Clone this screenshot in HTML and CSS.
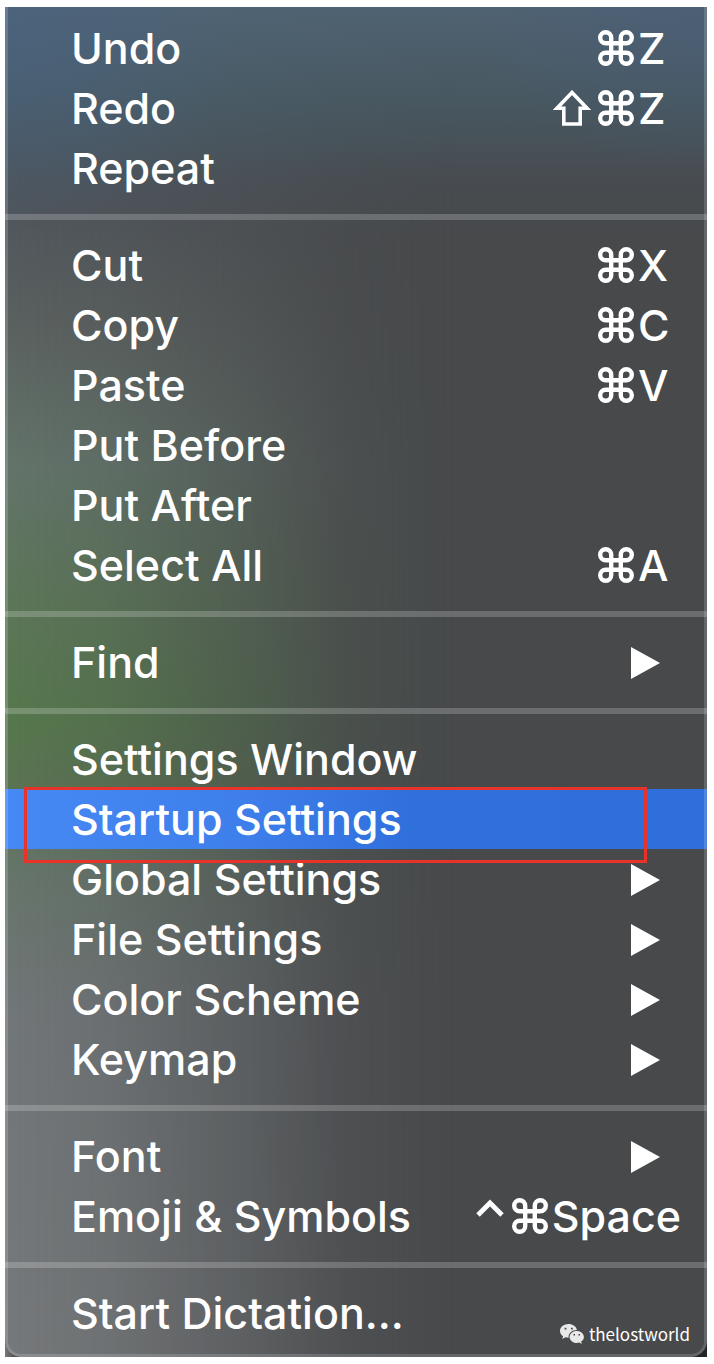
FILE: index.html
```html
<!DOCTYPE html>
<html lang="en">
<head>
<meta charset="utf-8">
<meta name="viewport" content="width=device-width, initial-scale=1">
<title>Edit menu</title>
<link rel="stylesheet" href="styles.css">
</head>
<body>
<svg class="defs" aria-hidden="true">
  <symbol id="cmd" viewBox="0 0 36 36">
    <path d="M13.200 13.200H22.800V22.800H13.200ZM13.200 13.200V7.700A5.500 5.500 0 1 0 7.700 13.200H13.200ZM22.800 13.200H28.300A5.500 5.500 0 1 0 22.800 7.700ZM22.800 22.800V28.300A5.500 5.500 0 1 0 28.300 22.800ZM13.200 22.800H7.700A5.500 5.500 0 1 0 13.200 28.300Z" fill="none" stroke="currentColor" stroke-width="4.400"/>
  </symbol>
  <symbol id="shift" viewBox="0 0 38 36">
    <path d="M19 2.500 34 18.200H27.200V34H10.800V18.200H4Z" fill="none" stroke="currentColor" stroke-width="3.600"/>
  </symbol>
  <symbol id="ctrl" viewBox="0 0 28 36">
    <path d="M2 17 14 5 26 17" fill="none" stroke="currentColor" stroke-width="4.800"/>
  </symbol>
  <symbol id="arrow" viewBox="0 0 29 32">
    <path d="M0 0 29 16 0 32Z" fill="currentColor"/>
  </symbol>
</svg>
<div class="backdrop">
<main class="menu">
  <ul class="group">
    <li><button class="item" type="button"><span>Undo</span><span class="keys"><svg class="cmd" role="img" aria-label="Command"><use href="#cmd"/></svg><kbd>Z</kbd></span></button></li>
    <li><button class="item" type="button"><span>Redo</span><span class="keys"><svg class="shift" role="img" aria-label="Shift"><use href="#shift"/></svg><svg class="cmd" role="img" aria-label="Command"><use href="#cmd"/></svg><kbd>Z</kbd></span></button></li>
    <li><button class="item" type="button"><span>Repeat</span></button></li>
  </ul>
  <ul class="group">
    <li><button class="item" type="button"><span>Cut</span><span class="keys"><svg class="cmd" role="img" aria-label="Command"><use href="#cmd"/></svg><kbd>X</kbd></span></button></li>
    <li><button class="item" type="button"><span>Copy</span><span class="keys"><svg class="cmd" role="img" aria-label="Command"><use href="#cmd"/></svg><kbd>C</kbd></span></button></li>
    <li><button class="item" type="button"><span>Paste</span><span class="keys"><svg class="cmd" role="img" aria-label="Command"><use href="#cmd"/></svg><kbd>V</kbd></span></button></li>
    <li><button class="item" type="button"><span>Put Before</span></button></li>
    <li><button class="item" type="button"><span>Put After</span></button></li>
    <li><button class="item" type="button"><span>Select All</span><span class="keys"><svg class="cmd" role="img" aria-label="Command"><use href="#cmd"/></svg><kbd>A</kbd></span></button></li>
  </ul>
  <ul class="group">
    <li><button class="item" type="button" aria-haspopup="true"><span>Find</span><svg class="arrow" aria-hidden="true"><use href="#arrow"/></svg></button></li>
  </ul>
  <ul class="group">
    <li><button class="item" type="button"><span>Settings Window</span></button></li>
    <li><button class="item item-selected" type="button"><span>Startup Settings</span></button></li>
    <li><button class="item" type="button" aria-haspopup="true"><span>Global Settings</span><svg class="arrow" aria-hidden="true"><use href="#arrow"/></svg></button></li>
    <li><button class="item" type="button" aria-haspopup="true"><span>File Settings</span><svg class="arrow" aria-hidden="true"><use href="#arrow"/></svg></button></li>
    <li><button class="item" type="button" aria-haspopup="true"><span>Color Scheme</span><svg class="arrow" aria-hidden="true"><use href="#arrow"/></svg></button></li>
    <li><button class="item" type="button" aria-haspopup="true"><span>Keymap</span><svg class="arrow" aria-hidden="true"><use href="#arrow"/></svg></button></li>
  </ul>
  <ul class="group">
    <li><button class="item" type="button" aria-haspopup="true"><span>Font</span><svg class="arrow" aria-hidden="true"><use href="#arrow"/></svg></button></li>
    <li><button class="item item-wide" type="button"><span>Emoji &amp; Symbols</span><span class="keys"><svg class="ctrl" role="img" aria-label="Control"><use href="#ctrl"/></svg><svg class="cmd" role="img" aria-label="Command"><use href="#cmd"/></svg><kbd>Space</kbd></span></button></li>
  </ul>
  <ul class="group">
    <li><button class="item" type="button"><span>Start Dictation...</span></button></li>
  </ul>
  <div class="credit">
    <svg class="wechat" viewBox="0 0 24 20" aria-hidden="true">
      <path d="M8.500 0C3.800 0 0 3 0 6.900c0 2.200 1.200 4 3.100 5.300L2.300 15l3.200-1.700c1 .3 2 .4 3.100.4C8 9.500 12 6 17 6 16.200 2.500 12.700 0 8.500 0Z" fill="#e8e8e8"/>
      <path d="M16.800 6.900c-4 0-7.200 2.700-7.200 6s3.200 6 7.200 6c.9 0 1.700-.1 2.500-.4l2.500 1.400-.7-2.300c1.700-1.100 2.800-2.800 2.800-4.700 0-3.300-3.200-6-7.100-6Z" fill="#e8e8e8"/>
      <path d="M4.600 3.800h1.800v1.800H4.600zM11 3.800h1.800v1.800H11zM13.500 10h1.500v1.500h-1.500zM18.500 10H20v1.500h-1.500z" fill="#45484a"/>
    </svg>
    <span>thelostworld</span>
  </div>
</main>
</div>
</body>
</html>
```
FILE: styles.css
```css
* { box-sizing: border-box; }

body {
  margin: 0;
  padding: 7px 7px 7px 5px;
  background: #fff;
}

.defs {
  position: absolute;
  width: 0;
  height: 0;
}

/* Dark desktop visible behind the rounded corners */
.backdrop { background: linear-gradient(to right, #77797a, #232426 20px); }

.menu {
  position: relative;
  isolation: isolate;
  padding: 11px 0 14px;
  border-radius: 0 0 16px 16px;
  overflow: hidden;
  color: #fff;
  font-family: Inter, "Liberation Sans", sans-serif;
  font-size: 43px;
  font-weight: 500;
  line-height: 60px;
  background: #47494b;
}

/* Desktop colours showing through on the left side */
.menu::before {
  content: "";
  position: absolute;
  inset: 0;
  z-index: -2;
  background: linear-gradient(to bottom, #4c5a66 0, #50565c 15%, #5a605f 23%, #63746a 34%, #5c7658 44%, #56784d 53%, #5b7353 58%, #66756a 64%, #717678 74%, #76797b 100%);
  -webkit-mask-image: linear-gradient(to right, #000 0, rgba(0, 0, 0, 0.850) 14%, rgba(0, 0, 0, 0.500) 33%, rgba(0, 0, 0, 0.150) 49%, transparent 64%);
  mask-image: linear-gradient(to right, #000 0, rgba(0, 0, 0, 0.850) 14%, rgba(0, 0, 0, 0.500) 33%, rgba(0, 0, 0, 0.150) 49%, transparent 64%);
}

/* Thin light rim */
.menu::after {
  content: "";
  position: absolute;
  inset: 0;
  z-index: 2;
  border: 3px solid rgba(255, 255, 255, 0.160);
  border-top: 0;
  border-radius: 0 0 16px 16px;
  pointer-events: none;
}

.group {
  position: relative;
  margin: 0;
  padding: 0;
  list-style: none;
}

/* Blue tint along the top */
.group:first-child::before {
  content: "";
  position: absolute;
  inset: -11px 0 -40px;
  z-index: -1;
  background:
    radial-gradient(ellipse 240px 200px at 0 20px, rgba(72, 99, 134, 0.500), transparent),
    radial-gradient(ellipse 240px 160px at 100% 0, rgba(72, 92, 122, 0.500), transparent),
    linear-gradient(to bottom, rgba(80, 100, 116, 0.950), rgba(72, 94, 106, 0.700) 40%, rgba(71, 82, 92, 0.300) 75%, transparent);
}

.group + .group {
  margin-top: 16px;
  padding-top: 15px;
  border-top: 6px solid rgba(255, 255, 255, 0.200);
}

.item {
  display: flex;
  align-items: center;
  justify-content: space-between;
  width: 100%;
  height: 60px;
  padding: 0 37px 0 66px;
  border: 0;
  background: none;
  color: inherit;
  font: inherit;
  text-align: left;
  white-space: nowrap;
}

.item-wide { padding-right: 26px; }

.item-selected {
  position: relative;
  z-index: 1;
  background: linear-gradient(to right, #4688f4, #3e7fec 33%, #2f70dc 58%, #2e6fdb);
}

.item-selected::after {
  content: "";
  position: absolute;
  inset: -2px 60px -14px 19px;
  border: 3px solid #e8332a;
}

.keys {
  display: flex;
  align-items: center;
  gap: 4px;
}

.keys kbd {
  min-width: 32px;
  font: inherit;
}

.cmd { width: 36px; height: 36px; }
.shift { width: 38px; height: 36px; margin-right: 3px; }
.ctrl { width: 28px; height: 36px; margin-right: 4px; }

.arrow {
  width: 29px;
  height: 32px;
  margin: 2px 10px 0 0;
}

.credit {
  position: absolute;
  right: 17px;
  bottom: 13px;
  display: flex;
  align-items: center;
  gap: 5px;
  font-family: "Noto Sans CJK SC", "Noto Sans", sans-serif;
  font-size: 17px;
  font-weight: 400;
  line-height: 20px;
}

.wechat { width: 24px; height: 20px; }
```
